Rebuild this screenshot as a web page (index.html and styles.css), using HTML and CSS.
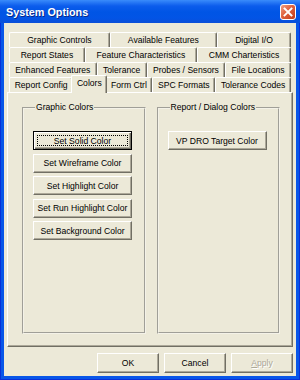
FILE: index.html
```html
<!DOCTYPE html>
<html>
<head>
<meta charset="utf-8">
<link rel="stylesheet" href="styles.css">
</head>
<body>
<div class="window">
  <div class="titlebar">
    <span class="title">System Options</span>
    <svg class="close" width="16" height="16" viewBox="0 0 16 16">
      <defs>
        <linearGradient id="cg" x1="0" y1="0" x2="1" y2="1">
          <stop offset="0" stop-color="#F0A48A"/>
          <stop offset="0.45" stop-color="#E0623E"/>
          <stop offset="1" stop-color="#C13A16"/>
        </linearGradient>
      </defs>
      <rect x="0.5" y="0.5" width="15" height="15" rx="2.5" fill="url(#cg)" stroke="#fff"/>
      <path d="M4.5 4.5 L11.5 11.5 M11.5 4.5 L4.5 11.5" stroke="#fff" stroke-width="1.9" stroke-linecap="square"/>
    </svg>
  </div>
  <div class="client">
    <div class="tabs">
      <div class="row">
        <div class="tab">Graphic Controls</div>
        <div class="tab">Available Features</div>
        <div class="tab">Digital I/O</div>
      </div>
      <div class="row">
        <div class="tab">Report States</div>
        <div class="tab">Feature Characteristics</div>
        <div class="tab">CMM Charteristics</div>
      </div>
      <div class="row">
        <div class="tab">Enhanced Features</div>
        <div class="tab">Tolerance</div>
        <div class="tab">Probes / Sensors</div>
        <div class="tab">File Locations</div>
      </div>
      <div class="row">
        <div class="tab">Report Config</div>
        <div class="tab sel">Colors</div>
        <div class="tab">Form Ctrl</div>
        <div class="tab">SPC Formats</div>
        <div class="tab">Tolerance Codes</div>
      </div>
    </div>
    <div class="panel">
      <fieldset class="group">
        <legend>Graphic Colors</legend>
        <div class="btn default">Set Solid Color</div>
        <div class="btn">Set Wireframe Color</div>
        <div class="btn">Set Highlight Color</div>
        <div class="btn">Set Run Highlight Color</div>
        <div class="btn">Set Background Color</div>
      </fieldset>
      <fieldset class="group">
        <legend>Report / Dialog Colors</legend>
        <div class="btn">VP DRO Target Color</div>
      </fieldset>
    </div>
    <div class="footer">
      <div class="btn wide">OK</div>
      <div class="btn wide">Cancel</div>
      <div class="btn wide disabled"><u>A</u>pply</div>
    </div>
  </div>
</div>
</body>
</html>
```
FILE: styles.css
```css
html, body {
  margin: 0;
  padding: 0;
}
body {
  width: 300px;
  height: 380px;
  overflow: hidden;
  font-family: "Liberation Sans", Arial, sans-serif;
  font-size: 8.6px;
  color: #000;
}
.window {
  width: 300px;
  height: 380px;
  box-sizing: border-box;
  background: #0856E8;
  padding: 0 4px 4px;
  display: flex;
  flex-direction: column;
  box-shadow: inset 1px 0 #0831D9, inset -1px 0 #0831D9, inset 0 -1px #0831D9;
}
.titlebar {
  height: 23px;
  margin: 0 -4px;
  padding: 0 4px 0 6px;
  display: flex;
  align-items: center;
  justify-content: space-between;
  background: linear-gradient(#3A8CFB 0, #2A7BF6 2px, #0C5CEC 6px, #0055E5 12px, #0254E6 18px, #0A4FD8 23px);
}
.title {
  color: #fff;
  font-weight: bold;
  font-size: 10.8px;
  text-shadow: 1px 1px #0A2A8A;
  padding-top: 1px;
}
.close {
  display: block;
  margin-top: 1px;
}
.client {
  flex: 1;
  background: #ECE9D8;
  display: flex;
  flex-direction: column;
  padding: 9px 3px 3px;
}
.tabs {
  margin: 0 2px;
  display: flex;
  flex-direction: column;
}
.row {
  display: flex;
  height: 15px;
}
.tab {
  flex: 1 1 auto;
  box-sizing: border-box;
  height: 15px;
  padding: 0 3px;
  text-align: center;
  white-space: nowrap;
  line-height: 14px;
  border-top: 1px solid #fff;
  border-left: 1px solid #fff;
  border-right: 1px solid #716F64;
  border-radius: 2px 2px 0 0;
  box-shadow: inset -1px 0 #ACA899;
  background: #ECE9D8;
}
.tab.sel {
  position: relative;
  z-index: 1;
  height: 18px;
  margin: -2px -2px 0;
  line-height: 14px;
}
.panel {
  flex: 1;
  display: flex;
  gap: 11px;
  padding: 9px 12px 12px 14px;
  border: 1px solid;
  border-color: #fff #716F64 #716F64 #fff;
  box-shadow: inset -1px -1px #ACA899;
}
.group {
  flex: 1;
  margin: 0;
  min-width: 0;
  padding: 18px 10px 0 9px;
  border: 2px groove #F4F2E8;
  display: flex;
  flex-direction: column;
  align-items: flex-start;
  gap: 3.5px;
}
.group legend {
  padding: 0 1px;
  margin-left: 2px;
  line-height: 11px;
}
.btn {
  box-sizing: border-box;
  width: 99px;
  height: 19px;
  display: flex;
  align-items: center;
  justify-content: center;
  white-space: nowrap;
  background: #ECE9D8;
  border: 1px solid;
  border-color: #fff #716F64 #716F64 #fff;
  box-shadow: inset -1px -1px #ACA899;
}
.btn.default {
  position: relative;
  border-color: #000;
  box-shadow: inset 1px 1px #fff, inset -1px -1px #716F64, inset -2px -2px #ACA899;
}
.btn.default::after {
  content: "";
  position: absolute;
  left: 3px;
  top: 3px;
  right: 3px;
  bottom: 3px;
  border: 1px dotted #000;
}
.footer {
  margin-top: 6px;
  display: flex;
  justify-content: flex-end;
  gap: 5px;
}
.btn.wide {
  width: 62px;
  height: 20px;
}
.btn.disabled {
  color: #ACA899;
  text-shadow: 1px 1px #fff;
}
```
